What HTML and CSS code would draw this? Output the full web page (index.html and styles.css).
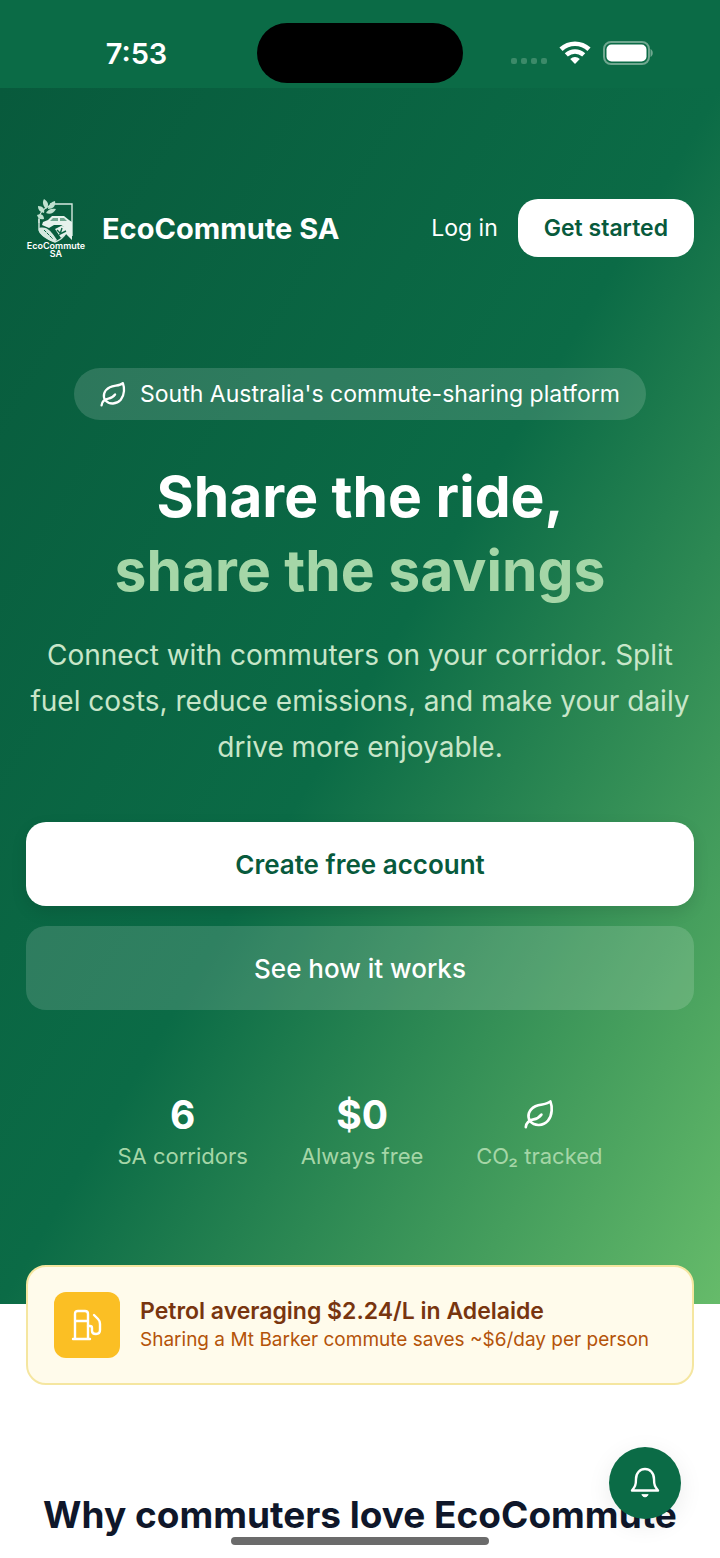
FILE: index.html
```html
<!DOCTYPE html>
<html lang="en">
  <head>
    <meta charset="UTF-8" />
    <meta name="viewport" content="width=device-width, initial-scale=1.0" />
    <title>EcoCommute SA</title>
    <link rel="stylesheet" href="styles.css">
  </head>
  <body>
    <div class="status-bar">
      <span class="time">7:53</span>
      <span class="island"></span>
      <span class="status-icons">
        <svg width="36" height="24" viewBox="0 0 36 24" fill="#3c8a69">
          <rect x="0" y="17" width="6" height="6" rx="2" />
          <rect x="10" y="17" width="6" height="6" rx="2" />
          <rect x="20" y="17" width="6" height="6" rx="2" />
          <rect x="30" y="17" width="6" height="6" rx="2" />
        </svg>
        <svg width="32" height="24" viewBox="0 0 32 24" fill="none" stroke="#fff" stroke-width="4.6">
          <path d="M2 8.3C10 .8 22 .8 30 8.3" />
          <path d="M7.3 13.9C12.5 9.3 19.5 9.3 24.7 13.9" />
          <path d="M11.2 18C14 15.3 18 15.3 20.8 18L16 23Z" fill="#fff" stroke="none" />
        </svg>
        <svg width="50" height="24" viewBox="0 0 50 24">
          <rect x="1" y="1" width="45" height="22" rx="7" fill="none" stroke="#6fa78f" stroke-width="2" />
          <rect x="3.500" y="3.500" width="40" height="17" rx="5" fill="#fff" />
          <path d="M47.5 8C50.5 9.5 50.5 14.5 47.5 16Z" fill="#6fa78f" />
        </svg>
      </span>
    </div>

    <header class="hero">
      <nav class="nav">
        <a class="brand" href="#">
          <svg class="logo" viewBox="0 0 60 60" aria-hidden="true">
            <path d="M24 6H46V38" fill="none" stroke="#d5e8df" stroke-width="1.4" />
            <path d="M13 21V32C14 37 22 41 29 44C34 42 38 39 40 35" fill="none" stroke="#d5e8df" stroke-width="1.4" />
            <path d="M13 25C12 15 17 11 25 7" fill="none" stroke="#d5e8df" stroke-width="1.2" />
            <g fill="#bfe0cf">
              <path d="M18 1C23 4 23 8 20 11C17 8 16 4 18 1Z" />
              <path d="M29 3C30 8 27 11 22 11C22 7 25 4 29 3Z" />
              <path d="M12 8C17 8 19 11 18 15C14 14 12 12 12 8Z" />
              <path d="M30 11C28 15 24 17 20 15C22 11 26 10 30 11Z" />
              <path d="M11 17C15 15 18 17 18 21C14 22 12 20 11 17Z" />
            </g>
            <path d="M17 24L22 22L26 18H38L43 22L46 24V30H40L35 27H28L23 30L16 27Z" fill="#e6f2ec" />
            <path d="M27 20H32V23H24ZM34 20H38L41 23H34Z" fill="#6fa78f" />
            <path d="M13 30C21 28 25 33 31 42L28 44C22 42 15 38 13 33Z" fill="#d5e8df" />
            <path d="M18 32L27 41" stroke="#0b6443" stroke-width="1" stroke-dasharray="3 1" />
            <path d="M29 31L35 28L46 29V42L40 36L35 40Z" fill="#e6f2ec" />
            <path d="M31 32L35 36M36 30L34 36L40 33" fill="none" stroke="#0b6443" stroke-width="1.4" />
            <text x="30" y="51" text-anchor="middle">EcoCommute</text>
            <text x="30" y="59" text-anchor="middle">SA</text>
          </svg>
          <span>EcoCommute SA</span>
        </a>
        <div class="nav-actions">
          <a class="login" href="#">Log in</a>
          <button class="btn-start" type="button">Get started</button>
        </div>
      </nav>

      <p class="pill">
        <svg class="leaf-small" viewBox="0 0 25 25" fill="none" stroke="#fff" stroke-width="2.2" stroke-linecap="round" stroke-linejoin="round">
          <path d="M22 2C19 5 14 4 9.500 6C3.500 9 2.500 14.500 5 18.500C9 23 16 22.500 20 18C24 13 23.500 6 22 2Z" />
          <path d="M1.500 23.500C2 19 5 17.500 8 17C11 16.500 13 15 14.500 13" />
        </svg>
        South Australia's commute-sharing platform
      </p>

      <h1>Share the ride,<br><span>share the savings</span></h1>
      <p class="lead">Connect with commuters on your corridor. Split fuel costs, reduce emissions, and make your daily drive more enjoyable.</p>

      <div class="cta">
        <button class="btn btn-primary" type="button">Create free account</button>
        <button class="btn btn-ghost" type="button">See how it works</button>
      </div>

      <ul class="stats">
        <li><strong>6</strong><span>SA corridors</span></li>
        <li><strong>$0</strong><span>Always free</span></li>
        <li>
          <strong>
            <svg class="leaf" viewBox="0 0 25 25" fill="none" stroke="#fff" stroke-width="2.2" stroke-linecap="round" stroke-linejoin="round">
              <path d="M22 2C19 5 14 4 9.500 6C3.500 9 2.500 14.500 5 18.500C9 23 16 22.500 20 18C24 13 23.500 6 22 2Z" />
              <path d="M1.500 23.500C2 19 5 17.500 8 17C11 16.500 13 15 14.500 13" />
            </svg>
          </strong>
          <span>CO₂ tracked</span>
        </li>
      </ul>
    </header>

    <main>
      <section class="petrol">
        <div class="petrol-icon">
          <svg width="32" height="32" viewBox="0 0 32 32" fill="none" stroke="#fff" stroke-width="2.4" stroke-linecap="round" stroke-linejoin="round">
            <path d="M4 30V5Q4 2 7 2H14Q17 2 17 5V30M2 30H19M4 12H17" />
            <path d="M17 17H19Q21 17 21 19V22Q21 25 25 25Q29 25 29 21V15Q29 12 27 10L23 6" />
          </svg>
        </div>
        <div>
          <h3>Petrol averaging $2.24/L in Adelaide</h3>
          <p>Sharing a Mt Barker commute saves ~$6/day per person</p>
        </div>
      </section>

      <h2>Why commuters love EcoCommute</h2>
    </main>

    <button class="bell" type="button" aria-label="Notifications">
      <svg width="30" height="32" viewBox="0 0 30 32" fill="none" stroke="#fff" stroke-width="2.4" stroke-linecap="round" stroke-linejoin="round">
        <path d="M2 23.5C5 20 6 18 6 12C6 6 10 2 15 2C20 2 24 6 24 12C24 18 25 20 28 23.5Z" />
        <path d="M12 28C13 30.5 17 30.5 18 28Z" fill="#fff" stroke-width="1" />
      </svg>
    </button>
    <div class="home-bar"></div>
  </body>
</html>
```
FILE: styles.css
```css
* {
  box-sizing: border-box;
}
body {
  margin: 0;
  background: #fff;
  color: #0f172a;
  font-family: Inter, "Liberation Sans", sans-serif;
}
h1, h2, h3, p, ul {
  margin: 0;
  padding: 0;
}
button {
  border: none;
  font-family: inherit;
  cursor: pointer;
}
a {
  color: #fff;
  text-decoration: none;
}
svg {
  display: block;
}

/* phone status bar */
.status-bar {
  display: grid;
  grid-template-columns: 1fr 206px 1fr;
  align-items: center;
  height: 88px;
  padding-top: 18px;
  background: #0b6b46;
}
.time {
  padding-left: 16px;
  text-align: center;
  color: #fff;
  font-size: 29px;
  font-weight: 600;
}
.island {
  height: 60px;
  border-radius: 30px;
  background: #000;
}
.status-icons {
  display: flex;
  justify-content: center;
  gap: 12px;
  padding-right: 20px;
}

.hero {
  padding: 110px 26px 130px;
  background: linear-gradient(to bottom right, #085a3c, #0b6b46 50%, #66bb6a);
  color: #fff;
  text-align: center;
}
.nav {
  display: flex;
  justify-content: space-between;
  align-items: center;
}
.brand {
  display: flex;
  align-items: center;
  gap: 16px;
  font-size: 29px;
  font-weight: 700;
}
.logo {
  width: 60px;
  height: 60px;
  overflow: visible;
}
.logo text {
  fill: #fff;
  font-size: 9px;
  font-weight: 600;
}
.nav-actions {
  display: flex;
  align-items: center;
  gap: 20px;
}
.login {
  font-size: 23px;
}
.btn-start {
  height: 58px;
  padding: 0 26px;
  border-radius: 20px;
  background: #fff;
  color: #085a3c;
  font-size: 23px;
  font-weight: 600;
}

.pill {
  display: flex;
  align-items: center;
  gap: 14px;
  width: fit-content;
  height: 52px;
  margin: 110px auto 40px;
  padding: 0 26px;
  border-radius: 26px;
  background: rgba(255, 255, 255, 0.15);
  font-size: 23px;
}
.leaf-small {
  width: 26px;
  height: 26px;
}
h1 {
  font-size: 57px;
  line-height: 74px;
  font-weight: 700;
}
h1 span {
  color: #a5d6a7;
}
.lead {
  margin-top: 24px;
  color: #c8e6c9;
  font-size: 28px;
  line-height: 46px;
}

.cta {
  display: flex;
  flex-direction: column;
  gap: 20px;
  margin-top: 52px;
}
.btn {
  height: 84px;
  border-radius: 20px;
  font-size: 26px;
  font-weight: 600;
}
.btn-primary {
  background: #fff;
  color: #085a3c;
  box-shadow: 0 6px 16px rgba(0, 0, 0, 0.1);
}
.btn-ghost {
  background: rgba(255, 255, 255, 0.15);
  color: #fff;
  font-weight: 500;
}

.stats {
  display: flex;
  justify-content: center;
  gap: 53px;
  margin-top: 80px;
  list-style: none;
}
.stats strong {
  display: flex;
  justify-content: center;
  align-items: center;
  height: 48px;
  font-size: 39px;
}
.stats span {
  display: block;
  color: #a5d6a7;
  font-size: 22px;
  line-height: 36px;
}
.leaf {
  width: 30px;
  height: 30px;
}

main {
  padding: 0 26px 20px;
}
.petrol {
  display: flex;
  align-items: center;
  gap: 20px;
  height: 120px;
  margin-top: -39px;
  padding: 0 26px;
  border: 2px solid #f5e6a0;
  border-radius: 20px;
  background: #fffbeb;
}
.petrol-icon {
  display: flex;
  justify-content: center;
  align-items: center;
  flex: none;
  width: 66px;
  height: 66px;
  border-radius: 12px;
  background: #fbbf24;
}
.petrol h3 {
  color: #78350f;
  font-size: 23px;
  line-height: 30px;
  font-weight: 600;
}
.petrol p {
  color: #b45309;
  font-size: 19px;
  line-height: 28px;
}
h2 {
  margin-top: 106px;
  font-size: 37px;
  line-height: 48px;
  font-weight: 700;
  text-align: center;
}

/* floating on top of the page */
.bell {
  position: fixed;
  right: 39px;
  bottom: 39px;
  display: flex;
  justify-content: center;
  align-items: center;
  width: 72px;
  height: 72px;
  padding: 0;
  border-radius: 50%;
  background: #0b6b46;
  box-shadow: 0 6px 24px rgba(0, 0, 0, 0.08);
}
.home-bar {
  position: fixed;
  bottom: 13px;
  left: 50%;
  width: 258px;
  height: 8px;
  margin-left: -129px;
  border-radius: 4px;
  background: #6b6b6b;
}
```
